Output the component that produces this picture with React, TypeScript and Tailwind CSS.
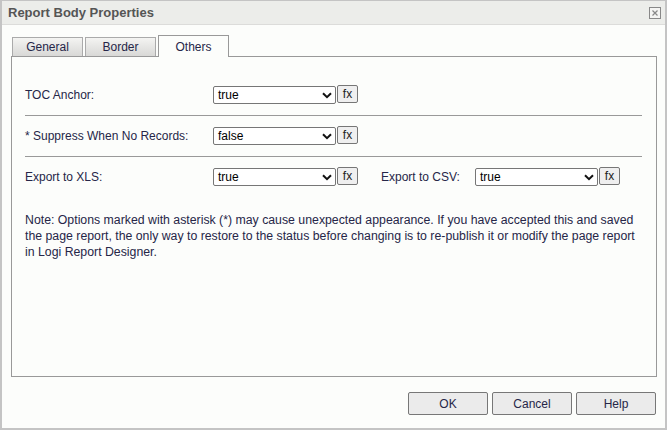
import React from "react";

const Chevron = () => (
  <svg width="10" height="7" viewBox="0 0 10 7" className="shrink-0">
    <path d="M1 1.2 L5 5.2 L9 1.2" fill="none" stroke="#111" strokeWidth="2" />
  </svg>
);

const Select = ({ value }: { value: string }) => (
  <div className="flex items-center">
    <div className="flex h-[18px] w-[123px] items-center justify-between rounded-[2px] border border-[#767676] bg-white pl-[4px] pr-[3px] text-[12px] text-black">
      <span>{value}</span>
      <Chevron />
    </div>
    <div className="ml-[1px] flex h-[18px] w-[21px] -translate-y-[1px] items-center justify-center rounded-[2px] border border-[#767676] bg-[#efefef] text-[12px] text-[#222]">
      fx
    </div>
  </div>
);

const Tab = ({ label, active }: { label: string; active?: boolean }) =>
  active ? (
    <div className="relative -mb-px flex h-[22px] w-[71px] items-center justify-center border border-b-0 border-[#999] bg-[#fcfdfb] pt-[1px] text-[12px] text-[#262648]">
      {label}
    </div>
  ) : (
    <div className="flex h-[19px] w-[71px] items-center justify-center border border-b-0 border-[#aaa] bg-gradient-to-b from-[#f4f4f2] to-[#d8d8d6] text-[12px] text-[#262648]">
      {label}
    </div>
  );

export default function App() {
  return (
    <div
      className="flex h-[430px] w-[667px] flex-col border border-b-2 border-l-2 border-r-2 border-[#c4c4c4] bg-[#fcfdfb] text-[#262648]"
      style={{ fontFamily: '"Liberation Sans", Arial, sans-serif' }}
    >
      <div className="flex h-[24px] shrink-0 items-center justify-between border-b border-[#dcdcda] bg-[#ecedea] pl-[6px] pr-[4px]">
        <span className="text-[13px] font-bold text-[#555]">Report Body Properties</span>
        <div className="flex h-[12px] w-[12px] items-center justify-center border border-[#888] bg-[#f4f4f2]">
          <svg width="8" height="8" viewBox="0 0 8 8">
            <path d="M1.5 1.5 L6.5 6.5 M6.5 1.5 L1.5 6.5" stroke="#888" strokeWidth="1.2" />
          </svg>
        </div>
      </div>

      <div className="flex flex-1 flex-col px-[9px] pt-[10px]">
        <div className="flex items-end gap-[2px] pl-[1px]">
          <Tab label="General" />
          <Tab label="Border" />
          <Tab label="Others" active />
        </div>
        <div className="flex h-[321px] w-[646px] flex-col border border-[#999] pl-[13px] pr-[14px] pt-[28px] text-[12px]">
          <div className="flex h-[20px] items-center">
            <span className="w-[188px]">TOC Anchor:</span>
            <Select value="true" />
          </div>
          <div className="mt-[10px] h-px bg-[#999]" />
          <div className="mt-[10px] flex h-[20px] items-center">
            <span className="w-[188px]">* Suppress When No Records:</span>
            <Select value="false" />
          </div>
          <div className="mt-[10px] h-px bg-[#999]" />
          <div className="mt-[10px] flex h-[20px] items-center">
            <span className="w-[188px]">Export to XLS:</span>
            <Select value="true" />
            <span className="ml-[23px] w-[94px]">Export to CSV:</span>
            <Select value="true" />
          </div>
          <p className="mt-[25px] pr-[4px] text-[12.3px] leading-[16px]">
            Note: Options marked with asterisk (*) may cause unexpected appearance. If you have accepted this and saved
            the page report, the only way to restore to the status before changing is to re-publish it or modify the page report
            in Logi Report Designer.
          </p>
        </div>
        <div className="mt-[15px] flex justify-end gap-[4px] pr-0">
          {["OK", "Cancel", "Help"].map((b) => (
            <div
              key={b}
              className="flex h-[23px] w-[80px] items-center justify-center rounded-[2px] border border-[#777] bg-[#ebebeb] text-[12px] text-[#262648]"
            >
              {b}
            </div>
          ))}
        </div>
      </div>
    </div>
  );
}
